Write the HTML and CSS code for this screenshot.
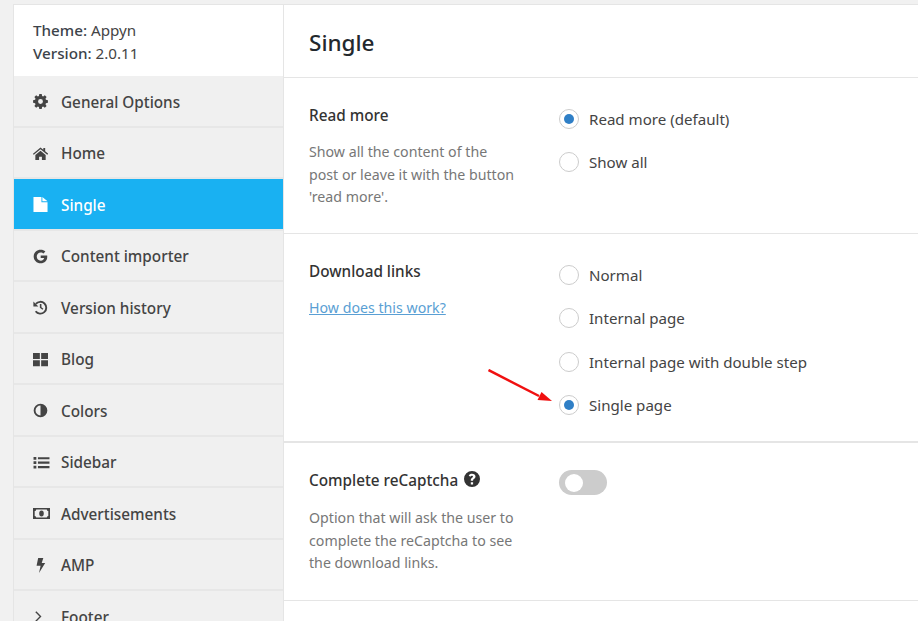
FILE: index.html
```html
<!DOCTYPE html>
<html lang="en">
<head>
<meta charset="utf-8">
<title>Appyn options</title>
<link rel="stylesheet" href="styles.css">
</head>
<body>
<div class="panel">
  <aside class="sidebar">
    <div class="theme">
      <div><b>Theme:</b> Appyn</div>
      <div><b>Version:</b> 2.0.11</div>
    </div>
    <nav class="nav">
      <a class="item"><svg class="ico" viewBox="0 0 16 16"><path fill-rule="evenodd" d="M6.700 0h2.600l.4 2.100 1.100.5L12.600 1.400l1.900 1.900-1.200 1.800.5 1.100 2.100.4v2.800l-2.100.4-.5 1.100 1.200 1.800-1.900 1.900-1.800-1.200-1.100.5-.4 2.100H6.700l-.4-2.100-1.100-.5-1.800 1.200-1.900-1.900 1.200-1.800-.5-1.100-2.100-.4V6.600l2.100-.4.5-1.100L1.500 3.300l1.900-1.900 1.800 1.200 1.100-.5zM8 5.400a2.600 2.600 0 1 0 0 5.200 2.600 2.600 0 0 0 0-5.200z"/></svg>General Options</a>
      <a class="item"><svg class="ico" viewBox="0 0 16 16"><path d="M8 1.500-.2 8.300l1 1.100L8 3.500l7.200 5.900 1-1.100L13 5.600V2h-2v2zM2.500 9.600V15h4v-3.500h3V15h4V9.600L8 5z"/></svg>Home</a>
      <a class="item active"><svg class="ico" viewBox="0 0 16 16"><path d="M.5 0h8.500v5.500h6.500V16H.5zM10 0l5.500 4.500H10z"/></svg>Single</a>
      <a class="item"><svg class="ico" viewBox="0 0 16 16"><path d="M8.200.8c2 0 3.700.7 5 1.900l-2.100 2c-.6-.5-1.500-1.100-2.900-1.100-2.300 0-4.200 1.900-4.200 4.400s1.900 4.400 4.200 4.400c2.300 0 3.400-1.500 3.700-2.800H8.200V7h6.900c.1.400.1.800.1 1.300 0 4.200-2.900 7-7 7C4 15.300.7 12 .7 8S4 .8 8.200.8z"/></svg>Content importer</a>
      <a class="item"><svg class="ico" viewBox="0 0 16 16"><path fill="none" stroke="currentColor" stroke-width="2" d="M3 4.200A6.300 6.300 0 1 1 2.800 12"/><path d="M.4 1.500v5.300h5.300zM7.300 4.300H9v3.300l2.100 1.600-1 1.300-2.800-2.200z"/></svg>Version history</a>
      <a class="item"><svg class="ico" viewBox="0 0 16 16"><path d="M0 1h7.300v6.500H0zM8.700 1H16v6.500H8.700zM0 8.800h7.300v6.500H0zM8.700 8.800H16v6.500H8.700z"/></svg>Blog</a>
      <a class="item"><svg class="ico" viewBox="0 0 16 16"><path fill-rule="evenodd" d="M8 .7a7.300 7.300 0 1 0 0 14.600A7.300 7.300 0 0 0 8 .7zm0 2v10.600A5.300 5.300 0 0 1 8 2.700z"/></svg>Colors</a>
      <a class="item"><svg class="ico wide" viewBox="0 0 17 16"><path d="M0 2h3v3H0zM0 6.700h3v3H0zM0 11.400h3v3H0zM4.700 2.300H17v2.300H4.700zM4.700 7H17v2.300H4.700zM4.700 11.700H17v2.300H4.700z"/></svg>Sidebar</a>
      <a class="item"><svg class="ico wide" viewBox="0 0 17 12"><path fill-rule="evenodd" d="M0 .5h17v11H0zM3.200 2a1.500 1.500 0 0 1-1.500 1.500v5A1.500 1.500 0 0 1 3.200 10h10.600a1.500 1.500 0 0 1 1.500-1.500v-5A1.500 1.500 0 0 1 13.800 2zM8.500 3a2.300 3 0 1 1 0 6 2.300 3 0 0 1 0-6z"/><path d="M7.800 4.200h1.200v3.600H7.800z"/></svg>Advertisements</a>
      <a class="item"><svg class="ico" viewBox="0 0 16 16"><path d="M5.500 0h5.500L9.300 5.300h3.700L6.400 16l1.700-7.800H3.800z"/></svg>AMP</a>
      <a class="item"><svg class="ico" viewBox="0 0 16 16"><path fill="none" stroke="currentColor" stroke-width="1.500" d="m3 3 5 5-5 5"/></svg>Footer</a>
    </nav>
  </aside>
  <main class="main">
    <header class="head"><h1>Single</h1></header>
    <section class="row row-a">
      <div class="info">
        <h2>Read more</h2>
        <p>Show all the content of the post or leave it with the button 'read more'.</p>
      </div>
      <div class="opts">
        <label class="opt"><span class="radio on"></span>Read more (default)</label>
        <label class="opt"><span class="radio"></span>Show all</label>
      </div>
    </section>
    <section class="row row-b">
      <div class="info">
        <h2>Download links</h2>
        <p><a class="link">How does this work?</a></p>
      </div>
      <div class="opts">
        <label class="opt"><span class="radio"></span>Normal</label>
        <label class="opt"><span class="radio"></span>Internal page</label>
        <label class="opt"><span class="radio"></span>Internal page with double step</label>
        <label class="opt"><span class="radio on"></span>Single page</label>
      </div>
      <svg class="arrow" viewBox="0 0 70 40"><path d="M.5 1 51 27" stroke="#f01010" stroke-width="2.500" fill="none"/><path d="M64 32 53.500 23 49.500 31z" fill="#f01010"/></svg>
    </section>
    <section class="row row-c">
      <div class="info">
        <h2>Complete reCaptcha <svg class="help" viewBox="0 0 16 16"><path fill-rule="evenodd" d="M8 0a8 8 0 1 0 0 16A8 8 0 0 0 8 0zm-1.200 11.300h2.300v2.100H6.800zM8 2.700c2 0 3.500 1.100 3.500 2.900 0 1.300-.8 1.900-1.500 2.400-.6.400-.9.700-.9 1.300v.4H6.800v-.6c0-1.200.6-1.800 1.300-2.300.5-.4.900-.6.900-1.200 0-.5-.5-.8-1.100-.8-.7 0-1.200.4-1.600 1L4.700 4.400C5.400 3.400 6.500 2.700 8 2.700z"/></svg></h2>
        <p>Option that will ask the user to complete the reCaptcha to see the download links.</p>
      </div>
      <div class="opts">
        <span class="toggle"><span class="knob"></span></span>
      </div>
    </section>
  </main>
</div>
</body>
</html>
```
FILE: styles.css
```css
* { box-sizing: border-box; }
html, body { height: 100%; }
body {
  margin: 0;
  background: #f1f1f1;
  overflow: hidden;
  font-family: "Noto Sans", "Open Sans", sans-serif;
  font-size: 15px;
  color: #444;
  padding: 4px 0 0 13px;
}
.panel {
  display: flex;
  width: 905px;
  height: 700px;
  background: #fff;
  border: 1px solid #e5e5e5;
  border-right: 0;
}
.sidebar {
  flex: 0 0 270px;
  background: #f0f0f0;
  border-right: 1px solid #e5e5e5;
}
.theme {
  height: 71px;
  padding: 14px 19px 0;
  background: #fff;
  line-height: 23px;
  font-size: 15.200px;
  color: #444;
}
.theme b { font-weight: 500; color: #3c434a; }
.nav { display: flex; flex-direction: column; }
.item {
  display: flex;
  align-items: center;
  height: 51.500px;
  padding: 2px 19px 0;
  border-bottom: 2px solid #e7e7e7;
  font-size: 15.300px;
  font-weight: 500;
  color: #444;
}
.item.active { background: #19b1f2; color: #fff; }
.ico { width: 15px; height: 15px; margin-right: 13px; flex: none; fill: currentColor; }
.ico.wide { width: 17px; margin-right: 11px; }
.main { flex: 1; min-width: 0; }
.head { height: 73px; border-bottom: 1px solid #e5e5e5; padding: 22px 25px 0; }
h1 { margin: 0; font-size: 22.500px; font-weight: 500; line-height: 32px; color: #23282d; }
.row {
  position: relative;
  display: flex;
  padding: 25px 25px 0;
  border-bottom: 1px solid #e5e5e5;
}
.row-a { height: 156px; }
.row-b { height: 209px; border-bottom-width: 2px; }
.row-c { height: 158px; }
.info { width: 250px; flex: none; }
h2 { margin: 0 0 14px; font-size: 15.300px; font-weight: 500; line-height: 24px; color: #333; }
.row-c h2 { margin-bottom: 15px; }
p { margin: 0; font-size: 14.200px; line-height: 22.500px; color: #777; width: 208px; }
.link { color: #5a9fd4; text-decoration: underline; }
.opts { display: flex; flex-direction: column; gap: 22.830px; padding-top: 5.750px; }
.opt { display: flex; align-items: center; height: 20.500px; font-size: 15.100px; color: #444; white-space: nowrap; }
.radio {
  width: 20px; height: 20px; margin-right: 10px; border-radius: 50%;
  border: 1px solid #ccc; background: #fff; flex: none;
  display: flex; align-items: center; justify-content: center;
}
.radio.on::after { content: ""; width: 10px; height: 10px; border-radius: 50%; background: #2f7fc6; }
.row-c .opts { padding-top: 2px; }
.toggle {
  display: flex; align-items: center;
  width: 48px; height: 25px; border-radius: 13px; background: #ccc; padding-left: 6px;
}
.knob { width: 18px; height: 18px; border-radius: 50%; background: #fff; }
.help { width: 16px; height: 16px; vertical-align: -1px; margin-left: 2px; fill: #333; }
.arrow { position: absolute; left: 204px; top: 135px; width: 70px; height: 40px; }
```
